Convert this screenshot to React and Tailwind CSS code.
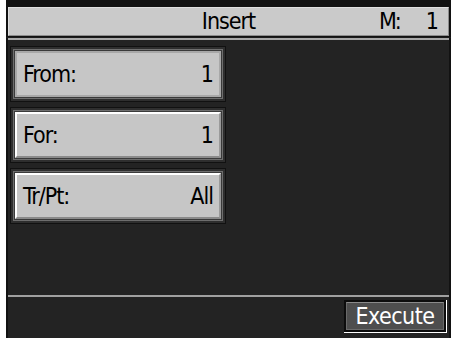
import React from 'react';

const font = { fontFamily: '"DejaVu Sans Condensed", "DejaVu Sans", sans-serif' };

const rows = [
    { label: 'From:', value: '1', lit: false },
    { label: 'For:', value: '1', lit: true },
    { label: 'Tr/Pt:', value: 'All', lit: true },
];

const Field = ({ label, value, lit }) => (
    <div className="w-[216px] h-[56px] bg-[#2e2e2e] border border-[#111] p-[2px]">
        <div className="h-full border border-[#6e6e6e] p-[1px] bg-[#3a3a3a]">
            <div
                className={`h-full flex items-center justify-between pl-[6px] pr-[6px] bg-[#c6c6c6] border-2 ${
                    lit ? 'border-t-white border-l-white border-r-[#9a9a9a] border-b-[#8a8a8a]' : 'border-[#a8a8a8]'
                }`}
            >
                <span className="text-[23px] text-black tracking-[-1px] leading-none">{label}</span>
                <span className="text-[23px] text-black tracking-[-1px] leading-none">{value}</span>
            </div>
        </div>
    </div>
);

export default function App() {
    return (
        <div className="w-[451px] h-[340px] bg-white flex" style={font}>
            <div className="ml-[6px] w-[445px] h-[338px] bg-[#121212] flex flex-col pt-[7px]">
                {/* Title bar */}
                <div className="mx-[2px] h-[29px] bg-[#cacaca] border border-[#8c8c8c] border-t-[#e0e0e0] border-l-[#e0e0e0] flex items-center relative">
                    <span className="absolute left-0 right-0 text-center text-[23px] text-black tracking-[-1px] leading-none">Insert</span>
                    <span className="ml-auto mr-[10px] text-[23px] text-black tracking-[-1px] leading-none flex gap-[26px]">
                        <span className="tracking-[-2px]">M:</span>
                        <span>1</span>
                    </span>
                </div>
                <div className="h-[1px] mt-[1px] bg-[#1c1c1c]" />
                <div className="h-[2px] mx-[2px] bg-[#a8a8a8]" />

                {/* Content */}
                <div className="flex-1 mx-[2px] bg-[#232323] pt-[6px] pl-[2px] flex flex-col gap-[5px]">
                    {rows.map((r) => (
                        <Field key={r.label} {...r} />
                    ))}
                </div>

                {/* Bottom bar */}
                <div className="h-[2px] mx-[2px] bg-[#a0a0a0]" />
                <div className="h-[41px] mx-[2px] bg-[#232323] flex justify-end items-start pt-[3px] pr-[2px]">
                    <div className="w-[103px] h-[33px] border-r border-b border-white bg-[#0c0c0c] p-[2px]">
                        <div className="h-full bg-[#4e4e4e] border border-[#6a6a6a] border-t-[#8a8a8a] flex items-center justify-center">
                            <span className="text-[23px] text-white tracking-[-0.5px] leading-none">Execute</span>
                        </div>
                    </div>
                </div>
            </div>
        </div>
    );
}
